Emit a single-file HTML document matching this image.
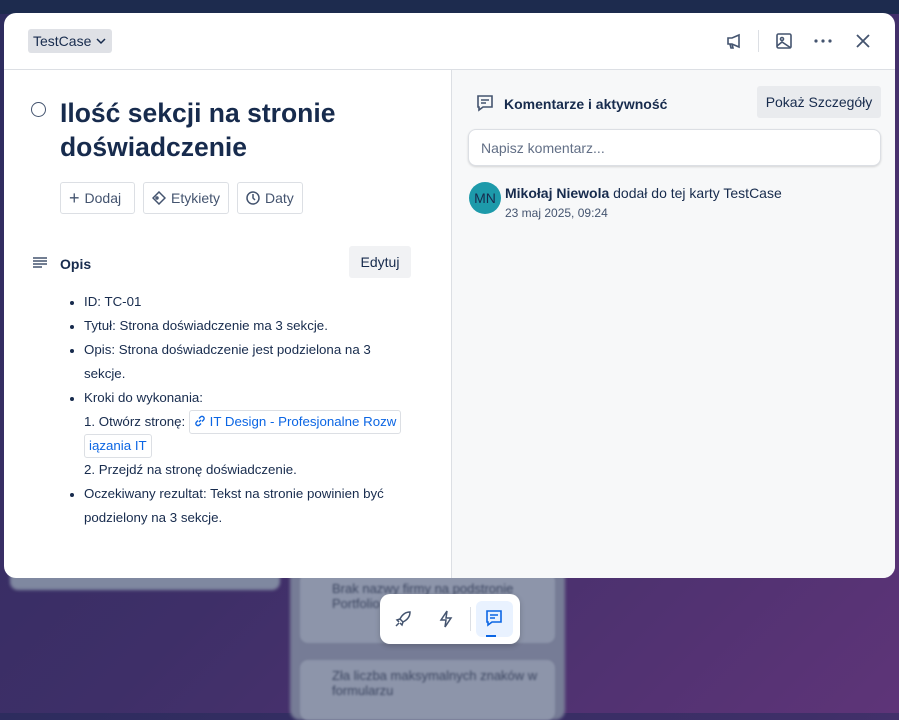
<!DOCTYPE html>
<html><head><meta charset="utf-8"><style>
*{box-sizing:border-box;margin:0;padding:0}
body{width:899px;height:713px;overflow:hidden;position:relative;font-family:"Liberation Sans",sans-serif;color:#172b4d;background:linear-gradient(135deg,#2d2c5e 0%,#3e2f68 50%,#5e3478 100%)}
.top{position:absolute;left:0;top:0;width:899px;height:14px;background:#1d2b4e}
.bg1{position:absolute;left:10px;top:560px;width:270px;height:30px;background:#7f88a0;border-radius:8px;filter:blur(1.5px)}
.col{position:absolute;left:290px;top:560px;width:275px;height:160px;background:#767c96;border-radius:10px;filter:blur(1.5px)}
.bc{position:absolute;left:300px;width:255px;background:#8d95aa;border-radius:8px;color:#3b4560;font-size:13px;padding:8px 10px 8px 32px;filter:blur(1px)}
.modal{position:absolute;left:4px;top:13px;width:891px;height:565px;background:#fff;border-radius:12px;overflow:hidden}
.hdr{height:57px;border-bottom:1px solid #dcdfe4;position:relative}
.tag{position:absolute;left:24px;top:16px;height:24px;background:#dfe1e6;border-radius:3px;font-size:14px;padding:4px 5px;color:#172b4d}
.left{position:absolute;left:0;top:57px;width:447px;bottom:0}
.right{position:absolute;left:447px;top:57px;right:0;bottom:0;background:#f7f8f9;border-left:1px solid #dcdfe4}
h1{position:absolute;left:56px;top:26px;font-size:26.5px;line-height:34px;font-weight:bold;color:#172b4d;width:340px}
.circ{position:absolute;left:27px;top:32px;width:15px;height:15px;border:1.6px solid #44546f;border-radius:50%}
.btn{position:absolute;top:112px;height:32px;border:1px solid #dcdfe4;border-radius:3px;font-size:14px;color:#44546f;padding:7px 8px;display:flex;align-items:center;gap:5px}
.opis{position:absolute;left:56px;top:186px;font-size:14px;font-weight:bold}
.edy{position:absolute;left:345px;top:176px;width:62px;height:32px;background:#f1f2f4;border-radius:3px;font-size:14px;text-align:center;line-height:32px;color:#172b4d}
ul{position:absolute;left:60px;top:220px;width:360px;font-size:13.3px;line-height:24px;color:#172b4d;padding-left:20px}
li::marker{font-size:12px}
.lnk{display:inline-block;border:1px solid #dcdfe4;border-radius:3px;color:#0c66e4;padding:0 4px;line-height:22px;white-space:nowrap}
.ic{position:absolute}
</style></head><body>
<div class="top"></div>
<div class="bg1"></div>
<div class="col"></div>
<div class="bc" style="top:573px;height:70px">Brak nazwy firmy na podstronie Portfolio</div>
<div class="bc" style="top:660px;height:60px">Zła liczba maksymalnych znaków w formularzu</div>

<div class="modal">
 <div class="hdr">
  <div class="tag">TestCase <svg width="12" height="10" viewBox="0 0 12 10"><path d="M2 3l4 4 4-4" stroke="#172b4d" stroke-width="1.5" fill="none"/></svg></div>
  <svg class="ic" style="left:721px;top:19px" width="18" height="18" viewBox="0 0 18 18" fill="none" stroke="#44546f" stroke-width="1.6"><path d="M3 6h4l7-3v12l-7-3H3z M5 12l1 4h2l-1-4"/></svg>
  <div style="position:absolute;left:754px;top:17px;width:1px;height:22px;background:#dcdfe4"></div>
  <svg class="ic" style="left:771px;top:19px" width="18" height="18" viewBox="0 0 18 18" fill="none" stroke="#44546f" stroke-width="1.6"><rect x="2" y="2" width="14" height="14" rx="1.5"/><circle cx="7" cy="7" r="1.5"/><path d="M2 14l5-4 9 6"/></svg>
  <svg class="ic" style="left:810px;top:26px" width="18" height="4" viewBox="0 0 18 4" fill="#44546f"><circle cx="2" cy="2" r="1.6"/><circle cx="9" cy="2" r="1.6"/><circle cx="16" cy="2" r="1.6"/></svg>
  <svg class="ic" style="left:851px;top:20px" width="16" height="16" viewBox="0 0 16 16" stroke="#44546f" stroke-width="1.8"><path d="M2 2l12 12M14 2L2 14"/></svg>
 </div>
 <div class="left">
  <div class="circ"></div>
  <h1>Ilość sekcji na stronie doświadczenie</h1>
  <div class="btn" style="left:56px;width:75px"><span style="font-size:18px;line-height:14px">+</span>Dodaj</div>
  <div class="btn" style="left:139px;width:86px"><svg width="14" height="14" viewBox="0 0 14 14" fill="none" stroke="#44546f" stroke-width="1.5"><path d="M7 1l6 6-6 6-6-6z"/><circle cx="5" cy="7" r="1"/></svg>Etykiety</div>
  <div class="btn" style="left:233px;width:66px"><svg width="14" height="14" viewBox="0 0 14 14" fill="none" stroke="#44546f" stroke-width="1.5"><circle cx="7" cy="7" r="6"/><path d="M7 3v4l2 2"/></svg>Daty</div>
  <svg class="ic" style="left:28px;top:186px" width="16" height="14" viewBox="0 0 16 14" stroke="#44546f" stroke-width="1.6"><path d="M1 2h14M1 5h14M1 8h14M1 11h9"/></svg>
  <div class="opis">Opis</div>
  <div class="edy">Edytuj</div>
  <ul>
   <li>ID: TC-01</li>
   <li>Tytuł: Strona doświadczenie ma 3 sekcje.</li>
   <li>Opis: Strona doświadczenie jest podzielona na 3<br>sekcje.</li>
   <li>Kroki do wykonania:<br><span style="white-space:nowrap">1. Otwórz stronę: <span class="lnk"><svg width="12" height="12" viewBox="0 0 12 12" fill="none" stroke="#0c66e4" stroke-width="1.4" style="vertical-align:-1px"><path d="M5 7l2-2M4 5.5L2.5 7a2 2 0 003 3L7 8.5M8 6.5L9.5 5a2 2 0 00-3-3L5 3.5"/></svg> IT Design - Profesjonalne Rozw</span></span><br><span class="lnk">iązania IT</span><br>2. Przejdź na stronę doświadczenie.</li>
   <li>Oczekiwany rezultat: Tekst na stronie powinien być<br>podzielony na 3 sekcje.</li>
  </ul>
 </div>
 <div class="right">
  <svg class="ic" style="left:24px;top:24px" width="18" height="18" viewBox="0 0 18 18" fill="none" stroke="#44546f" stroke-width="1.6"><path d="M2 2h14v11H7l-4 3v-3H2z M5 6h8M5 9h5"/></svg>
  <div style="position:absolute;left:52px;top:26px;font-size:14px;font-weight:bold">Komentarze i aktywność</div>
  <div style="position:absolute;left:305px;top:16px;width:124px;height:32px;background:#e9ebee;border-radius:3px;font-size:14px;line-height:32px;text-align:center">Pokaż Szczegóły</div>
  <div style="position:absolute;left:16px;top:59px;width:413px;height:37px;background:#fff;border:1px solid #dcdfe4;border-radius:8px;box-shadow:0 1px 2px rgba(0,0,0,.15);font-size:14px;color:#626f86;padding:10px 12px">Napisz komentarz...</div>
  <div style="position:absolute;left:17px;top:112px;width:32px;height:32px;border-radius:50%;background:#1d9aaa;color:#172b4d;font-size:14px;line-height:32px;text-align:center">MN</div>
  <div style="position:absolute;left:53px;top:115px;font-size:14px"><b>Mikołaj Niewola</b> dodał do tej karty TestCase</div>
  <div style="position:absolute;left:53px;top:136px;font-size:12px;color:#44546f">23 maj 2025, 09:24</div>
 </div>
</div>

<div style="position:absolute;left:380px;top:594px;width:140px;height:50px;background:#fff;border-radius:10px;box-shadow:0 2px 6px rgba(0,0,0,.2)">
 <svg class="ic" style="left:14px;top:16px" width="18" height="18" viewBox="0 0 18 18" fill="none" stroke="#44546f" stroke-width="1.5"><path d="M16 2c-5 0-8 3-10 7l3 3c4-2 7-5 7-10z M6 9l-3 1 2 2 M9 12l-1 3-2-2 M2 16l3-3"/></svg>
 <svg class="ic" style="left:58px;top:16px" width="16" height="18" viewBox="0 0 16 18" fill="none" stroke="#44546f" stroke-width="1.5"><path d="M9 1L3 10h5l-1 7 6-9H8z"/></svg>
 <div style="position:absolute;left:90px;top:13px;width:1px;height:24px;background:#dcdfe4"></div>
 <div style="position:absolute;left:96px;top:7px;width:37px;height:36px;background:#e9f2ff;border-radius:6px"></div>
 <svg class="ic" style="left:105px;top:15px" width="18" height="18" viewBox="0 0 18 18" fill="none" stroke="#0c66e4" stroke-width="1.6"><path d="M2 2h14v11H7l-4 3v-3H2z M5 6h8M5 9h5"/></svg>
 <div style="position:absolute;left:106px;top:41px;width:10px;height:2px;background:#0c66e4"></div>
</div>
</body></html>
